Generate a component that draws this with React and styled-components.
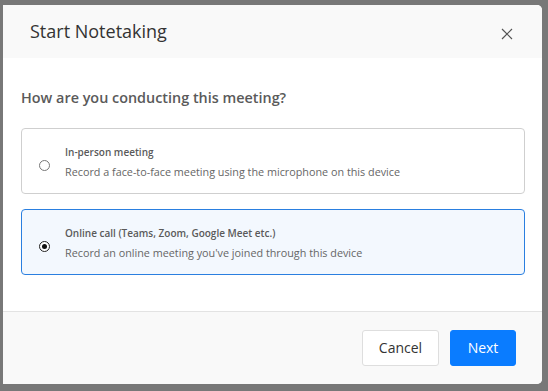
import React, { useState } from "react";
import styled, { createGlobalStyle } from "styled-components";

const Global = createGlobalStyle`
  html, body { margin: 0; padding: 0; }
  body {
    background: #787878;
    font-family: "Open Sans", "Liberation Sans", sans-serif;
    width: 548px;
    height: 391px;
    overflow: hidden;
  }
`;

const Stage = styled.div`
  width: 548px;
  height: 391px;
  padding: 5px 0 0 3px;
  box-sizing: border-box;
`;

const Modal = styled.div`
  width: 539px;
  height: 379px;
  background: #fff;
  border-radius: 0 5px 5px 0;
  display: flex;
  flex-direction: column;
  overflow: hidden;
`;

const Header = styled.div`
  height: 53px;
  flex: none;
  background: #f9f9f9;
  display: flex;
  align-items: center;
  justify-content: space-between;
  padding: 0 29px 0 27px;
`;

const Title = styled.h2`
  margin: 0;
  font-size: 18px;
  font-weight: 400;
  color: #333;
  line-height: 24px;
  padding-bottom: 1px;
`;

const CloseButton = styled.button`
  border: 0;
  background: none;
  padding: 0;
  margin-top: 4px;
  width: 13px;
  height: 13px;
  display: flex;
  align-items: center;
  justify-content: center;
  cursor: pointer;
`;

const Body = styled.div`
  flex: 1;
  padding: 30px 17px 0 18px;
  display: flex;
  flex-direction: column;
`;

const Question = styled.div`
  font-size: 14.4px;
  font-weight: 600;
  color: #5a5a5a;
  line-height: 20px;
  margin-bottom: 20px;
`;

const Options = styled.div`
  display: flex;
  flex-direction: column;
  gap: 15px;
`;

const Option = styled.label`
  height: 66px;
  box-sizing: border-box;
  border: 1px solid ${(p) => (p.$selected ? "#2a7fe0" : "#cfcfcf")};
  background: ${(p) => (p.$selected ? "#f3f8fe" : "#fff")};
  border-radius: 4px;
  display: flex;
  align-items: center;
  padding: 0 0 0 17px;
  gap: 15px;
  cursor: pointer;
`;

const Radio = styled.span`
  width: 11px;
  height: 11px;
  box-sizing: border-box;
  border-radius: 50%;
  border: 1px solid ${(p) => (p.$checked ? "#222" : "#777")};
  background: #fff;
  display: flex;
  align-items: center;
  justify-content: center;
  margin-top: 8px;
  &::after {
    content: "";
    width: 5px;
    height: 5px;
    border-radius: 50%;
    background: #111;
    display: ${(p) => (p.$checked ? "block" : "none")};
  }
`;

const OptionText = styled.div`
  display: flex;
  flex-direction: column;
  gap: 5px;
  padding-top: 2px;
`;

const OptionTitle = styled.div`
  font-size: 10px;
  font-weight: 600;
  color: #5a5a5a;
  line-height: 14px;
`;

const OptionDesc = styled.div`
  font-size: 10.8px;
  color: #666;
  line-height: 15px;
`;

const Footer = styled.div`
  height: 71px;
  flex: none;
  border-top: 1px solid #e3e3e3;
  background: #f9f9f9;
  display: flex;
  align-items: center;
  justify-content: flex-end;
  gap: 11px;
  padding: 0 26px 1px 0;
`;

const Button = styled.button`
  height: 36px;
  box-sizing: border-box;
  border-radius: 3px;
  font-family: inherit;
  font-size: 14px;
  padding: 0;
  width: ${(p) => (p.$primary ? "66px" : "77px")};
  border: 1px solid ${(p) => (p.$primary ? "#0a7cff" : "#dedede")};
  background: ${(p) => (p.$primary ? "#0a7cff" : "#fff")};
  color: ${(p) => (p.$primary ? "#fff" : "#333")};
  font-weight: ${(p) => (p.$primary ? 500 : 400)};
  cursor: pointer;
`;

const options = [
  {
    id: "inperson",
    title: "In-person meeting",
    desc: "Record a face-to-face meeting using the microphone on this device",
  },
  {
    id: "online",
    title: "Online call (Teams, Zoom, Google Meet etc.)",
    desc: "Record an online meeting you've joined through this device",
  },
];

export default function App() {
  const [selected, setSelected] = useState("online");
  return (
    <>
      <Global />
      <Stage>
        <Modal>
          <Header>
            <Title>Start Notetaking</Title>
            <CloseButton aria-label="Close">
              <svg width="12" height="12" viewBox="0 0 12 12">
                <path d="M1 1L11 11M11 1L1 11" stroke="#555" strokeWidth="1.2" />
              </svg>
            </CloseButton>
          </Header>
          <Body>
            <Question>How are you conducting this meeting?</Question>
            <Options>
              {options.map((o) => (
                <Option
                  key={o.id}
                  $selected={selected === o.id}
                  onClick={() => setSelected(o.id)}
                >
                  <Radio $checked={selected === o.id} />
                  <OptionText>
                    <OptionTitle>{o.title}</OptionTitle>
                    <OptionDesc>{o.desc}</OptionDesc>
                  </OptionText>
                </Option>
              ))}
            </Options>
          </Body>
          <Footer>
            <Button>Cancel</Button>
            <Button $primary>Next</Button>
          </Footer>
        </Modal>
      </Stage>
    </>
  );
}
